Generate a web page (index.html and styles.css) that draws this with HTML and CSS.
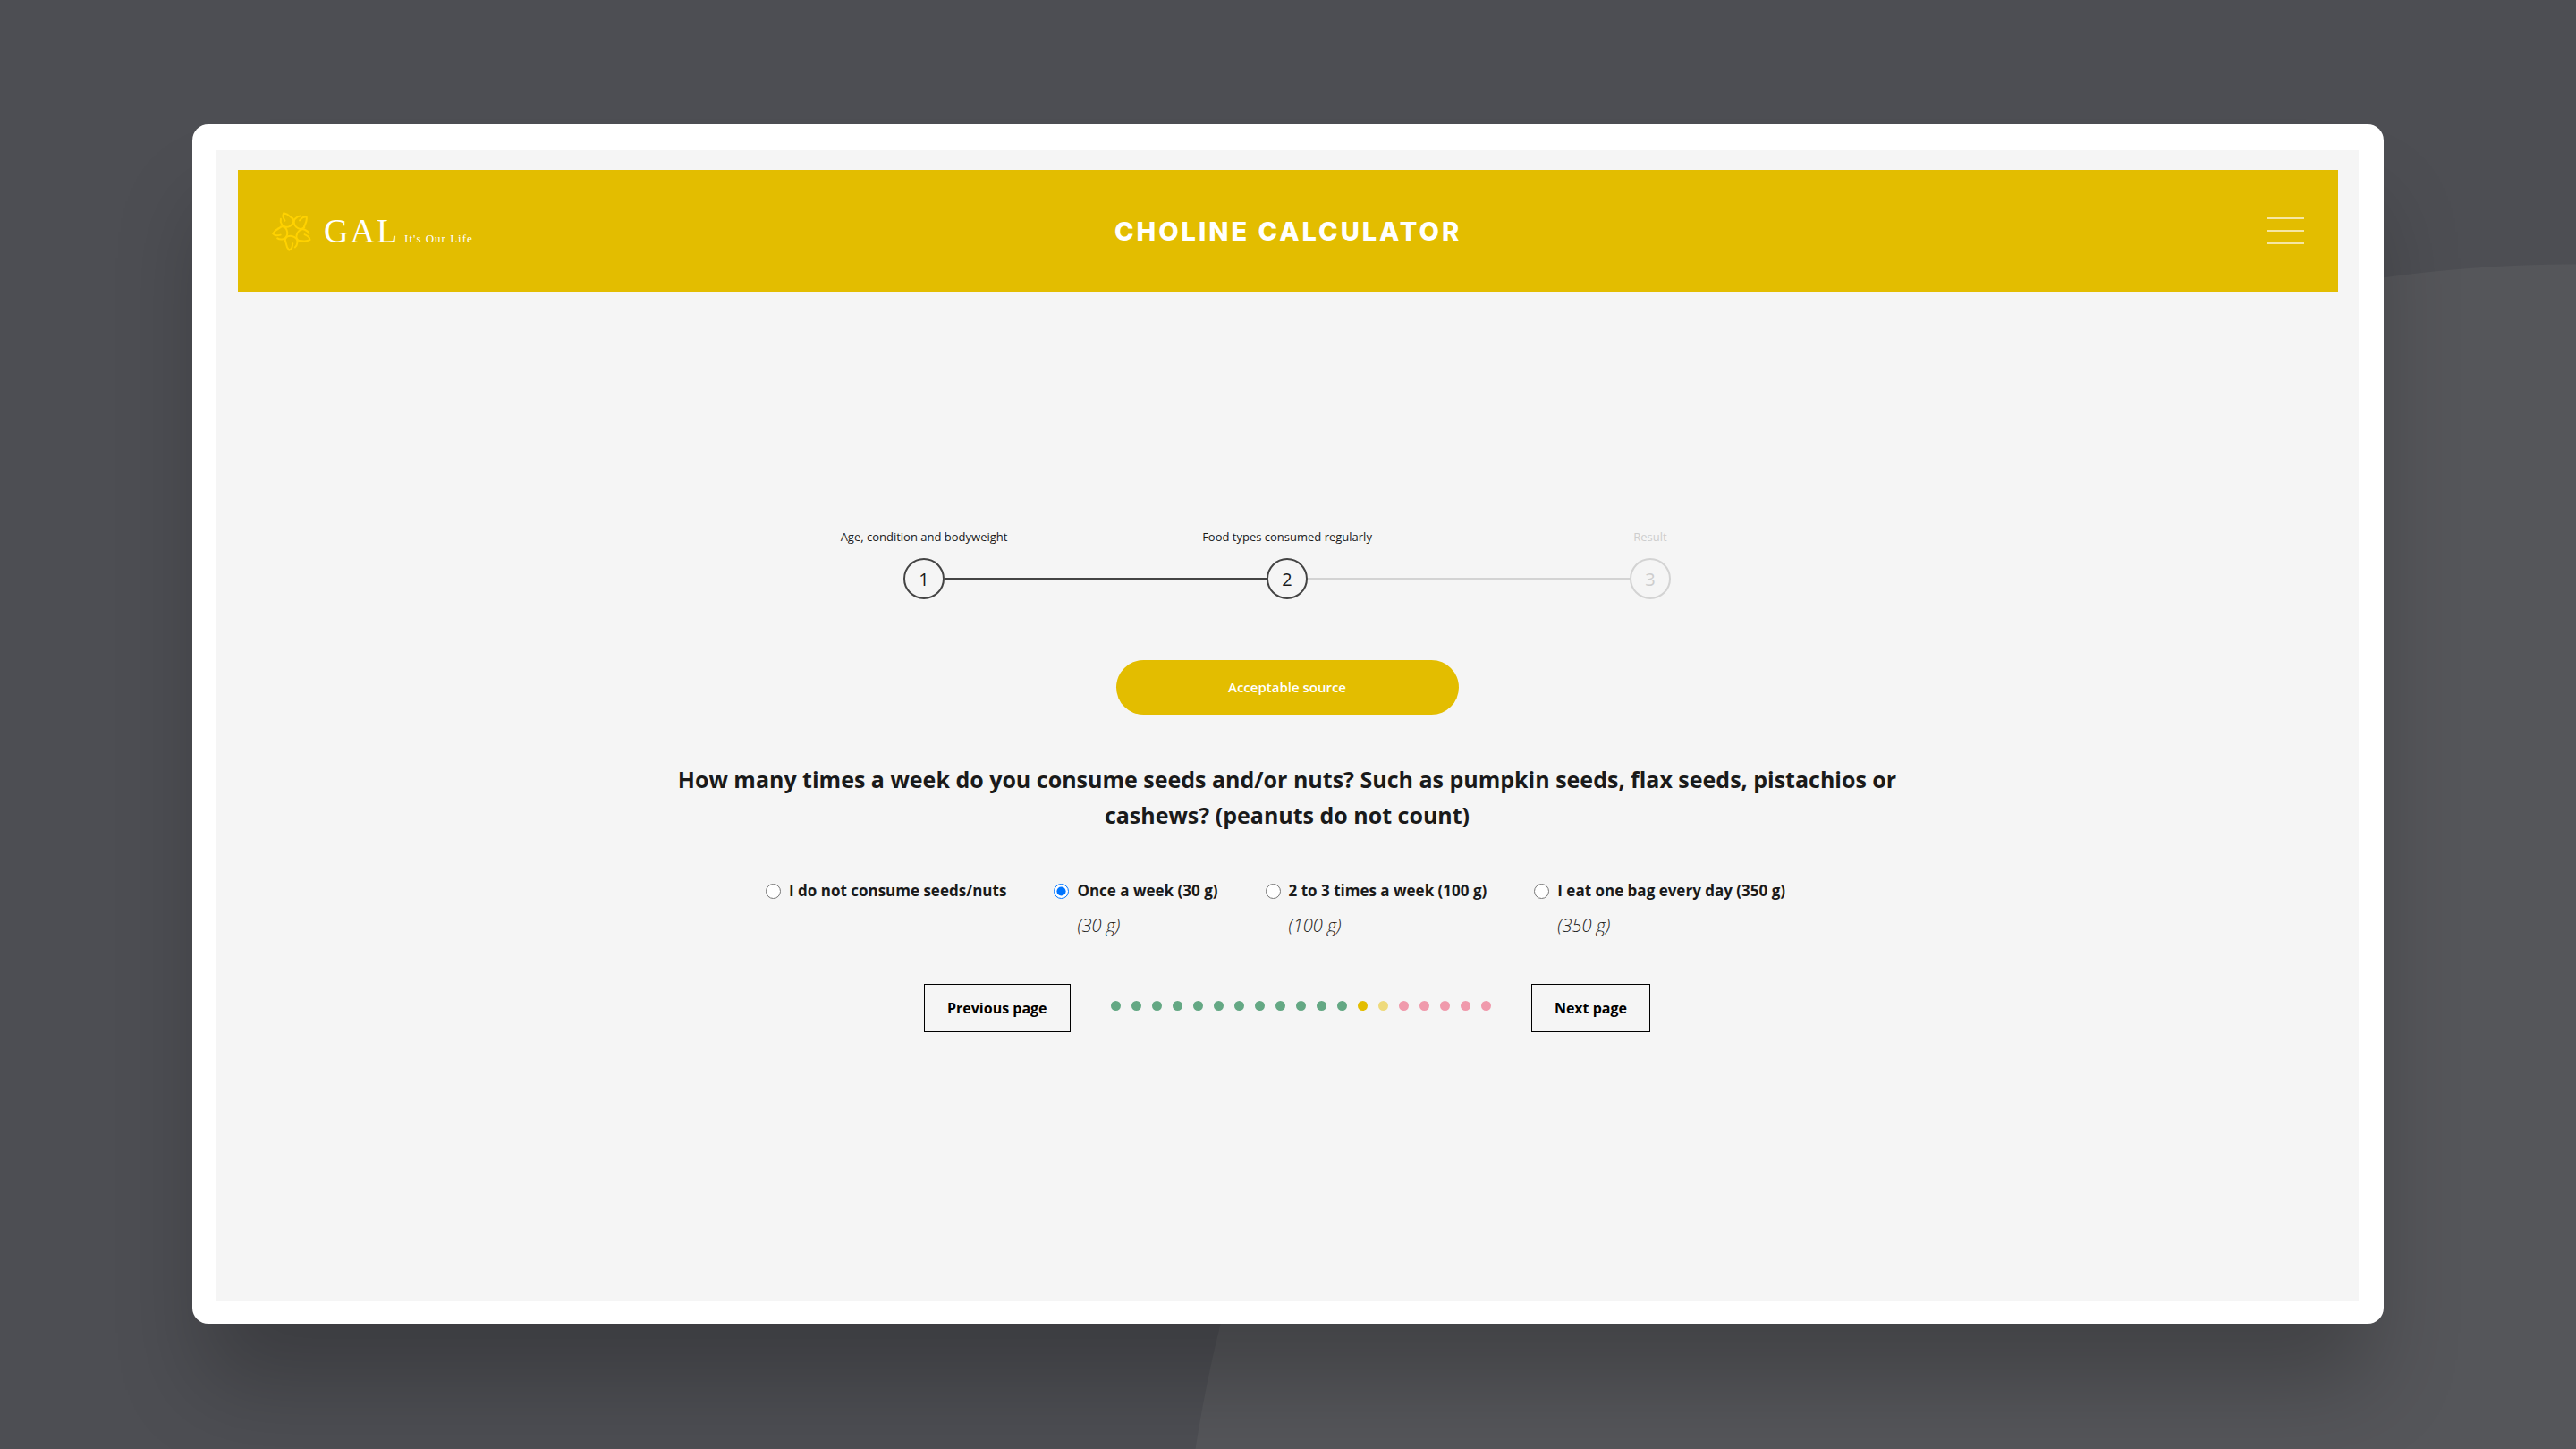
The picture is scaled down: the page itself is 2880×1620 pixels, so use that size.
FILE: index.html
```html
<!DOCTYPE html>
<html lang="en">

<head>
    <meta charset="UTF-8">
    <meta name="viewport" content="width=device-width, initial-scale=1.0">
    <title>Choline Calculator</title>
    <link rel="stylesheet" href="styles.css">
</head>

<body>
    <div class="frame">
        <div class="screen">
            <header class="header">
                <a class="logo" href="#">
                    <svg class="logo-mark" viewBox="0 0 46 46" fill="none" aria-hidden="true">
                        <defs>
                            <!-- One petal, pointing down from the centre -->
                            <path id="petal" d="M-7 12C-7 8-4 6 0 6C4 6 7 9 7 12C7 15 6 17 5 18M-7 11C-5 14-6 18-1 22C2 20 2 18 2 14" />
                        </defs>
                        <g stroke="#ffd200" stroke-width="2" stroke-linecap="round" stroke-linejoin="round">
                            <use href="#petal" transform="translate(23 23) rotate(7)" />
                            <use href="#petal" transform="translate(23 23) rotate(79)" />
                            <use href="#petal" transform="translate(23 23) rotate(151)" />
                            <use href="#petal" transform="translate(23 23) rotate(223)" />
                            <use href="#petal" transform="translate(23 23) rotate(295)" />
                        </g>
                    </svg>
                    <span class="logo-name">GAL</span>
                    <span class="logo-tagline">It's Our Life</span>
                </a>
                <h1 class="title">CHOLINE CALCULATOR</h1>
                <button type="button" class="menu-btn" aria-label="Menu">
                    <span></span>
                    <span></span>
                    <span></span>
                </button>
            </header>

            <main class="content">
                <ol class="steps">
                    <li class="step"><span class="step-label">Age, condition and bodyweight</span><span class="step-number">1</span></li>
                    <li class="step-line" role="presentation"></li>
                    <li class="step"><span class="step-label">Food types consumed regularly</span><span class="step-number">2</span></li>
                    <li class="step-line inactive" role="presentation"></li>
                    <li class="step inactive"><span class="step-label">Result</span><span class="step-number">3</span></li>
                </ol>

                <div class="source">Acceptable source</div>

                <form class="question-form">
                    <h2 class="question" id="question">How many times a week do you consume seeds and/or nuts? Such as pumpkin seeds, flax seeds, pistachios or cashews? (peanuts do not count)</h2>

                    <div class="options" role="radiogroup" aria-labelledby="question">
                        <div class="option">
                            <input type="radio" name="amount" id="amount-0">
                            <label for="amount-0">I do not consume seeds/nuts</label>
                        </div>
                        <div class="option">
                            <input type="radio" name="amount" id="amount-30" checked>
                            <label for="amount-30">Once a week (30 g)<em>(30 g)</em></label>
                        </div>
                        <div class="option">
                            <input type="radio" name="amount" id="amount-100">
                            <label for="amount-100">2 to 3 times a week (100 g)<em>(100 g)</em></label>
                        </div>
                        <div class="option">
                            <input type="radio" name="amount" id="amount-350">
                            <label for="amount-350">I eat one bag every day (350 g)<em>(350 g)</em></label>
                        </div>
                    </div>

                    <div class="pager">
                        <button type="button" class="page-btn">Previous page</button>
                        <div class="dots">
                            <i class="dot good"></i><i class="dot good"></i><i class="dot good"></i><i class="dot good"></i>
                            <i class="dot good"></i><i class="dot good"></i><i class="dot good"></i><i class="dot good"></i>
                            <i class="dot good"></i><i class="dot good"></i><i class="dot good"></i><i class="dot good"></i>
                            <i class="dot current"></i><i class="dot medium"></i>
                            <i class="dot low"></i><i class="dot low"></i><i class="dot low"></i><i class="dot low"></i><i class="dot low"></i>
                        </div>
                        <button type="button" class="page-btn">Next page</button>
                    </div>
                </form>
            </main>
        </div>
    </div>
</body>

</html>
```

FILE: styles.css
```css
/* Global Styles */
* {
    box-sizing: border-box;
}

body {
    font-family: "Open Sans", "Noto Sans", sans-serif;
    color: #1a1a1a;
    background: radial-gradient(circle 1562px at 100% 1857px, #55565a 1561px, transparent 1562px) #4d4e53;
    margin: 0;
    padding: 139px 215px 140px;
    min-height: 100vh;
    display: flex;
}

/* Device frame */
.frame {
    flex: 1;
    display: flex;
    padding: 29px 28px 25px 26px;
    background-color: #fff;
    border-radius: 18px;
    box-shadow: 0 80px 100px -14px rgba(0, 0, 0, 0.23);
}

.screen {
    flex: 1;
    padding: 22px 23px 22px 25px;
    background-color: #f5f5f5;
}

/* Header */
.header {
    display: grid;
    grid-template-columns: 1fr auto 1fr;
    align-items: center;
    height: 136px;
    padding: 0 38px;
    background-color: #e3bd00;
    color: #fff;
}

.logo {
    display: flex;
    align-items: baseline;
    color: #fff;
    font-family: "Liberation Serif", serif;
    text-decoration: none;
}

.logo-mark {
    align-self: center;
    width: 46px;
    height: 46px;
    margin-right: 12px;
}

.logo-name {
    font-size: 38px;
    letter-spacing: 2px;
    line-height: 46px;
}

.logo-tagline {
    margin-left: 6px;
    font-size: 13px;
    letter-spacing: 1px;
}

.title {
    margin: 0;
    font-family: Inter, sans-serif;
    font-size: 29px;
    font-weight: 800;
    letter-spacing: 3px;
}

.menu-btn {
    justify-self: end;
    display: flex;
    flex-direction: column;
    gap: 12px;
    padding: 0;
    border: none;
    background: none;
    cursor: pointer;
}

.menu-btn span {
    width: 42px;
    height: 2px;
    background-color: #f6e7a4;
}

/* Content */
.content {
    max-width: 1400px;
    margin: 0 auto;
    padding: 264px 2px 0 0;
}

.steps {
    display: flex;
    align-items: flex-end;
    width: 858px;
    max-width: 100%;
    margin: 0 auto;
    padding: 0;
    list-style: none;
}

.step {
    display: flex;
    flex-direction: column;
    align-items: center;
    gap: 14px;
    width: 46px;
}

.step-label {
    font-size: 13px;
    line-height: 20px;
    white-space: nowrap;
}

.step-number {
    width: 46px;
    height: 46px;
    border: 2px solid #444;
    border-radius: 50%;
    font-size: 20px;
    line-height: 44px;
    text-align: center;
}

.step-line {
    flex: 1;
    height: 2px;
    margin-bottom: 22px;
    background-color: #444;
}

.inactive .step-number {
    border-color: #d3d3d3;
}

.step.inactive {
    color: #cdcdcd;
}

.step-line.inactive {
    background-color: #d3d3d3;
}

.source {
    width: 383px;
    margin: 68px auto 52px;
    border-radius: 31px;
    background-color: #e3bd00;
    color: #fff;
    font-size: 15px;
    font-weight: 600;
    line-height: 61px;
    text-align: center;
}

.question {
    margin: 0;
    font-size: 25px;
    font-weight: 700;
    line-height: 40px;
    text-align: center;
}

.options {
    display: flex;
    justify-content: center;
    gap: 53px;
    margin-top: 48px;
    padding-right: 26px;
}

.option {
    display: flex;
    gap: 9px;
    font-size: 17px;
    font-weight: 700;
    line-height: 34px;
}

.option input {
    width: 17px;
    height: 17px;
    margin: 9px 0 0;
    accent-color: #0075ff;
}

.option em {
    display: block;
    color: #222;
    font-size: 20px;
    font-weight: 300;
    line-height: 44px;
}

/* Paging */
.pager {
    display: flex;
    justify-content: space-between;
    width: 812px;
    max-width: 100%;
    margin: 43px auto 0;
}

.page-btn {
    padding: 0 25px;
    border: 1px solid #000;
    background: none;
    color: #000;
    font-family: inherit;
    font-size: 16px;
    font-weight: 700;
    line-height: 52px;
    cursor: pointer;
}

.dots {
    display: flex;
    gap: 12px;
    padding-top: 19px;
}

.dot {
    width: 11px;
    height: 11px;
    border-radius: 50%;
}

.good {
    background-color: #64a884;
}

.current {
    background-color: #e3bd00;
}

.medium {
    background-color: #eeda7c;
}

.low {
    background-color: #f09aac;
}
```
